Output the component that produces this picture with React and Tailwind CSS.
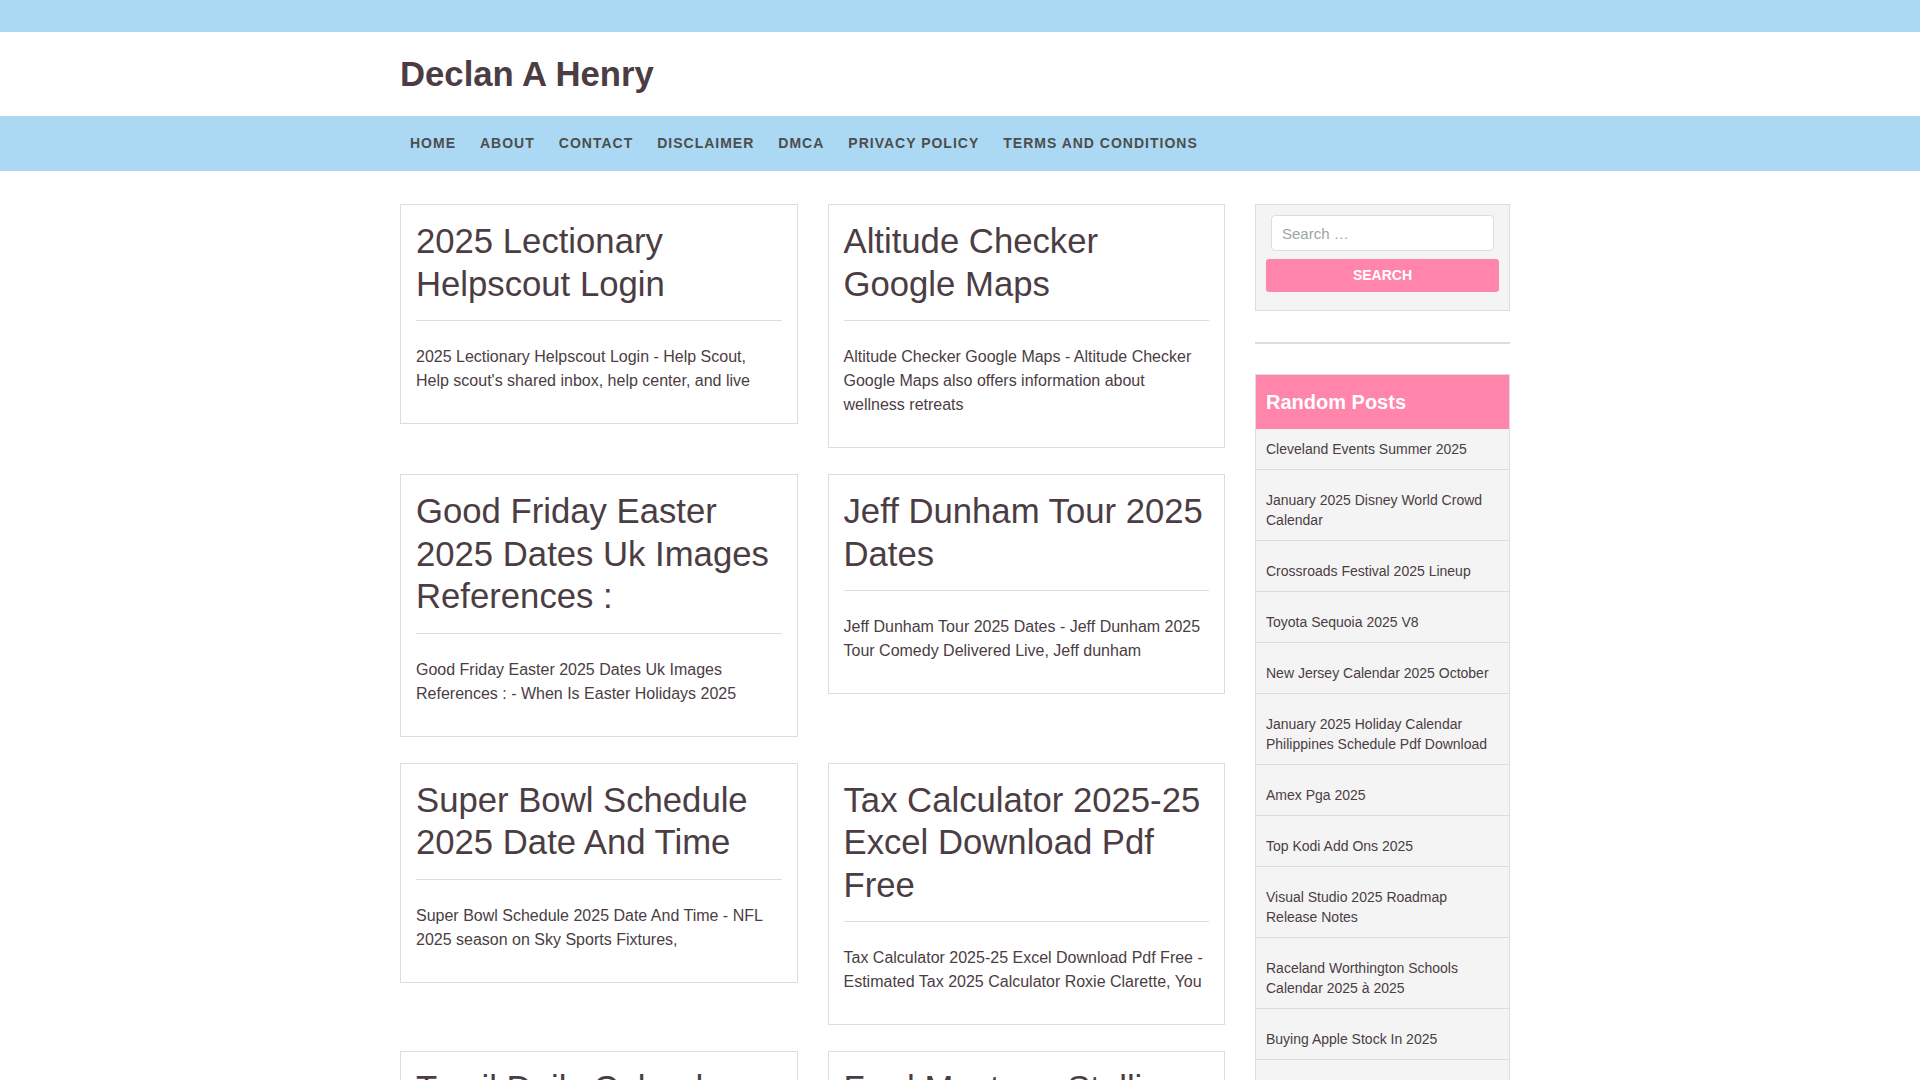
import React from 'react';

const menu = ['Home', 'About', 'Contact', 'Disclaimer', 'DMCA', 'Privacy Policy', 'Terms and Conditions'];

const posts = [
  {
    title: '2025 Lectionary Helpscout Login',
    excerpt: "2025 Lectionary Helpscout Login - Help Scout, Help scout's shared inbox, help center, and live",
  },
  {
    title: 'Altitude Checker Google Maps',
    excerpt: 'Altitude Checker Google Maps - Altitude Checker Google Maps also offers information about wellness retreats',
  },
  {
    title: 'Good Friday Easter 2025 Dates Uk Images References :',
    excerpt: 'Good Friday Easter 2025 Dates Uk Images References : - When Is Easter Holidays 2025',
  },
  {
    title: 'Jeff Dunham Tour 2025 Dates',
    excerpt: 'Jeff Dunham Tour 2025 Dates - Jeff Dunham 2025 Tour Comedy Delivered Live, Jeff dunham',
  },
  {
    title: 'Super Bowl Schedule 2025 Date And Time',
    excerpt: 'Super Bowl Schedule 2025 Date And Time - NFL 2025 season on Sky Sports Fixtures,',
  },
  {
    title: 'Tax Calculator 2025-25 Excel Download Pdf Free',
    excerpt: 'Tax Calculator 2025-25 Excel Download Pdf Free - Estimated Tax 2025 Calculator Roxie Clarette, You',
  },
  {
    title: 'Tamil Daily Calendar 2025',
    excerpt: 'Tamil Daily Calendar 2025 - Tamil Calendar 2025 with festivals, holidays and auspicious days',
  },
  {
    title: 'Ford Mustang Stallion 2025',
    excerpt: 'Ford Mustang Stallion 2025 - The new Mustang lineup, specs, price and release date',
  },
];

const randomPosts = [
  'Cleveland Events Summer 2025',
  'January 2025 Disney World Crowd Calendar',
  'Crossroads Festival 2025 Lineup',
  'Toyota Sequoia 2025 V8',
  'New Jersey Calendar 2025 October',
  'January 2025 Holiday Calendar Philippines Schedule Pdf Download',
  'Amex Pga 2025',
  'Top Kodi Add Ons 2025',
  'Visual Studio 2025 Roadmap Release Notes',
  'Raceland Worthington Schools Calendar 2025 à 2025',
  'Buying Apple Stock In 2025',
  'Nfl Draft 2025 Mock Draft',
  'Easter 2025 Date Uk',
];

const PostCard = ({ title, excerpt }) => (
  <article className="border border-[#dddddd] bg-white px-[15px] pt-[15px] pb-[30px]">
    {/* header */}
    <div className="border-b border-[#dddddd] pb-[15px]">
      <h2 className="text-[34.7px] leading-[42.5px] font-normal text-[#4b3d43]">{title}</h2>
    </div>
    <p className="pt-[24px] text-[16px] leading-[24px] text-[#4b3d43]">{excerpt}</p>
  </article>
);

export default function App() {
  return (
    <div className="min-h-[1400px] bg-white font-['Liberation_Sans',Arial,sans-serif] text-[#4b3d43]">
      {/* top strip */}
      <div className="h-[32px] bg-[#abd9f4]" />

      {/* site title */}
      <header className="bg-white">
        <div className="mx-auto flex h-[84px] w-[1120px] items-center pr-[10px]">
          <h1 className="text-[34.7px] font-bold leading-none text-[#4b3d43]">Declan A Henry</h1>
        </div>
      </header>

      {/* nav */}
      <nav className="bg-[#abd9f4]">
        <ul className="mx-auto flex h-[55px] w-[1120px] items-center pr-[10px]">
          {menu.map((item, i) => (
            <li
              key={item}
              className={
                i === 0
                  ? 'pl-[10px] pr-[12px] text-[14px] font-bold uppercase tracking-[1px] text-[#4d4d4d]'
                  : 'px-[12px] text-[14px] font-bold uppercase tracking-[1px] text-[#4d4d4d]'
              }
            >
              {item}
            </li>
          ))}
        </ul>
      </nav>

      <div className="mx-auto mt-[33px] flex w-[1120px] items-start pr-[10px]">
        {/* posts */}
        <main className="grid w-[825px] grid-cols-2 items-start gap-x-[30px] gap-y-[26px]">
          {posts.map((p) => (
            <PostCard key={p.title} {...p} />
          ))}
        </main>

        {/* sidebar */}
        <aside className="ml-[30px] w-[255px]">
          <div className="border border-[#dddddd] bg-[#f4f4f4] px-[10px] pt-[10px] pb-[18px]">
            <div className="px-[5px]">
              <input
                type="text"
                placeholder="Search …"
                className="h-[36px] w-full rounded-[4px] border border-[#dddddd] bg-white px-[10px] text-[15px] text-[#4b3d43] placeholder:text-[#9ba5a7] outline-none"
              />
            </div>
            <button className="mt-[8px] h-[33px] w-full rounded-[3px] bg-[#ff85ab] text-[14px] font-bold uppercase text-white">
              Search
            </button>
          </div>

          <div className="mt-[31px] h-[2px] bg-[#dddddd]" />

          <div className="mt-[30px] border border-[#dddddd] bg-[#f4f4f4]">
            <div className="flex h-[54px] items-center bg-[#ff85ab] px-[10px]">
              <h3 className="text-[20px] font-bold text-white">Random Posts</h3>
            </div>
            <ul>
              {randomPosts.map((t, i) => (
                <li
                  key={t}
                  className={
                    i === 0
                      ? 'border-b border-[#dddddd] px-[10px] py-[10px] text-[14px] leading-[20px] text-[#4b3d43]'
                      : 'border-b border-[#dddddd] px-[10px] pt-[20px] pb-[10px] text-[14px] leading-[20px] text-[#4b3d43]'
                  }
                >
                  {t}
                </li>
              ))}
            </ul>
          </div>
        </aside>
      </div>
    </div>
  );
}
